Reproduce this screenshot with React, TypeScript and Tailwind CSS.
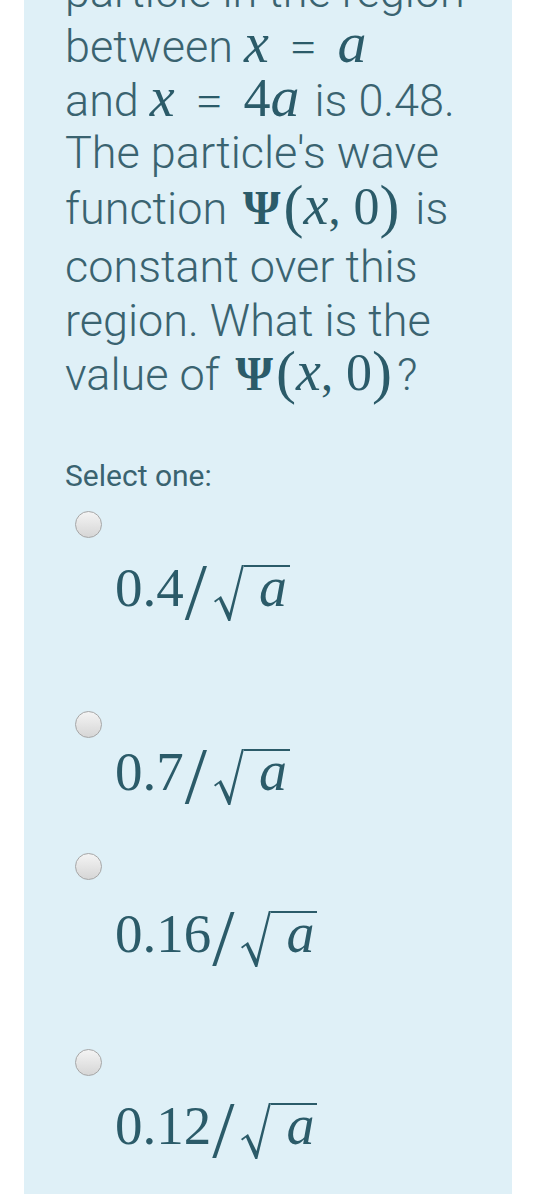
import React from "react";

const mathCls = "font-['Liberation_Serif','DejaVu_Serif',serif] text-[#2b5b69] leading-[0]";

function Radio({ top }: { top: string }) {
  return (
    <div
      className={
        "ml-[10px] w-[27px] h-[27px] rounded-full border border-[#a6a6a6] bg-linear-to-b from-[#f4f4f4] to-[#d6d6d6] " +
        top
      }
    />
  );
}

function Psi() {
  // Ψ(x, 0) with tall parentheses
  return (
    <span className={mathCls}>
      <span className="text-[48px] font-bold ml-[5px]">Ψ</span>
      <span className="text-[60px] align-[-2px] ml-[3px]">(</span>
      <span className="text-[56px] italic">x</span>
      <span className="text-[48px] mr-[13px]">,</span>
      <span className="text-[52px]">0</span>
      <span className="text-[60px] align-[-2px] mr-[5px]">)</span>
    </span>
  );
}

function Answer({ num, top }: { num: string; top: string }) {
  return (
    <div className={"ml-[50px] h-[60px] leading-[60px] whitespace-nowrap " + top}>
      <span className={mathCls + " text-[55px]"}>{num}</span>
      <span className={mathCls + " text-[80px] align-[-13px] ml-[1px]"}>/</span>
      <svg
        width="30"
        height="56"
        viewBox="0 0 30 56"
        className="inline-block align-[-15px] ml-[7px]"
      >
        <path d="M0 36 L7 31 L15.5 48 L27.8 0 L30 0 L16.3 56 L14.3 56 L5 34.6 L1.2 37.4 Z" fill="#2b5b69" />
      </svg>
      <span className="inline-block border-t-[2.5px] border-[#2b5b69] leading-[41px] pl-[15px] pr-[3px] font-['Liberation_Serif',serif] italic text-[56px] text-[#2b5b69]">
        a
      </span>
    </div>
  );
}

export default function App() {
  return (
    <div className="min-h-screen bg-white">
      <div className="mx-[24px] w-[488px] h-[1194px] overflow-hidden bg-[#dff0f7] pl-[41px] font-['Roboto',sans-serif] font-light text-[#3a6370]">
        <div className="text-[45px] leading-[54px] whitespace-nowrap">
          <div className="mt-[-35px] h-[55px]">particle in the region</div>
          <div className="h-[54px]">
            between{" "}
            <span className={mathCls + " text-[56px] italic"}>x</span>
            <span className={mathCls + " font-['DejaVu_Serif',serif] text-[44px] mx-[22px]"}>=</span>
            <span className={mathCls + " text-[58px] italic"}>a</span>
          </div>
          <div className="h-[52px]">
            and{" "}
            <span className={mathCls + " text-[56px] italic"}>x</span>
            <span className={mathCls + " font-['DejaVu_Serif',serif] text-[44px] mx-[22px]"}>=</span>
            <span className={mathCls + " text-[54px]"}>4</span>
            <span className={mathCls + " text-[58px] italic mr-[4px]"}>a</span> is 0.48.
          </div>
          <div className="h-[56px]">The particle's wave</div>
          <div className="h-[58px]">
            function <Psi /> is
          </div>
          <div className="h-[54px]">constant over this</div>
          <div className="h-[54px]">region. What is the</div>
          <div className="h-[50px]">
            value of <Psi />?
          </div>
        </div>

        <div className="mt-[61px] text-[30px] leading-[34px] font-normal">Select one:</div>

        <Radio top="mt-[18px]" />
        <Answer num="0.4" top="mt-[27px]" />

        <Radio top="mt-[86px]" />
        <Answer num="0.7" top="mt-[11px]" />

        <Radio top="mt-[44px]" />
        <Answer num="0.16" top="mt-[31px]" />

        <Radio top="mt-[78px]" />
        <Answer num="0.12" top="mt-[27px]" />
      </div>
    </div>
  );
}
